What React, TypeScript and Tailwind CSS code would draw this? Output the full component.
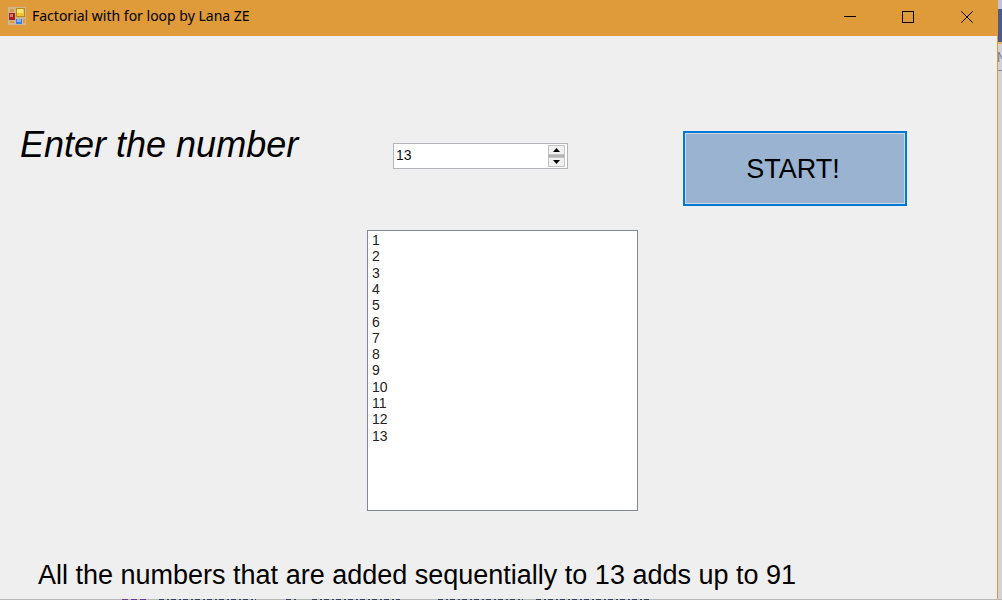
import { useState } from "react";

function AppIcon() {
  return (
    <svg width="18" height="18" viewBox="0 0 18 18" aria-hidden="true">
      <rect width="18" height="18" fill="#cdb493" />
      <rect x="2" y="2" width="4" height="3" fill="#df9a3a" />
      <rect x="2" y="14" width="4" height="2" fill="#df9a3a" />
      <rect x="15" y="12" width="2" height="4" fill="#df9a3a" />
      <rect x="1" y="6" width="6" height="7" fill="#a3201f" />
      <rect x="2" y="7" width="3" height="3" fill="#e0776e" />
      <rect x="8" y="1" width="9" height="9" fill="#b98a10" />
      <rect x="9" y="2" width="7" height="7" fill="#f0c52f" />
      <rect x="9" y="2" width="6" height="4" fill="#fbe477" />
      <rect x="8" y="12" width="6" height="5" fill="#3f7fe0" />
      <rect x="9" y="12" width="4" height="3" fill="#7fb2f7" />
    </svg>
  );
}

function TitleBar() {
  return (
    <header className="flex h-9 items-center bg-[#df9a3a] pb-1 pl-2">
      <AppIcon />
      <h1 className="ml-1.5 flex-1 font-['Noto_Sans',sans-serif] text-sm leading-5">
        Factorial with for loop by Lana ZE
      </h1>
      <div className="flex h-full pt-0.5">
        <button type="button" aria-label="Minimize" className="grid w-[58px] place-items-center">
          <svg width="12" height="12" viewBox="0 0 12 12" shapeRendering="crispEdges">
            <path d="M0 5.5H12" stroke="#000" />
          </svg>
        </button>
        <button type="button" aria-label="Maximize" className="grid w-[58px] place-items-center">
          <svg width="12" height="12" viewBox="0 0 12 12" shapeRendering="crispEdges">
            <rect x="0.5" y="0.5" width="11" height="11" fill="none" stroke="#000" />
          </svg>
        </button>
        <button type="button" aria-label="Close" className="grid w-[60px] place-items-center">
          <svg width="12" height="12" viewBox="0 0 12 12">
            <path d="M0.3 0.3L11.7 11.7M11.7 0.3L0.3 11.7" stroke="#000" />
          </svg>
        </button>
      </div>
    </header>
  );
}

function Spinner({ value, onChange }: { value: number; onChange: (n: number) => void }) {
  const arrow =
    "grid h-[10px] w-[17px] place-items-center border border-[#c4c4c4] bg-[#f0f0f0]";
  return (
    <div className="flex h-[26px] w-[175px] items-center border border-[#b4b4ba] bg-white pr-0.5">
      <input
        type="text"
        inputMode="numeric"
        aria-label="Number"
        value={value}
        onChange={(e) => onChange(Number(e.target.value) || 0)}
        className="h-5 min-w-0 flex-1 bg-transparent pb-0.5 pl-0.5 text-sm text-[#111] outline-none"
      />
      <div className="flex flex-col gap-0.5 bg-[#b4b4b4]">
        <button type="button" aria-label="Increase" className={arrow} onClick={() => onChange(value + 1)}>
          <svg width="7" height="4" viewBox="0 0 7 4">
            <path d="M3.5 0L7 4H0Z" />
          </svg>
        </button>
        <button type="button" aria-label="Decrease" className={arrow} onClick={() => onChange(Math.max(0, value - 1))}>
          <svg width="7" height="4" viewBox="0 0 7 4">
            <path d="M0 0H7L3.5 4Z" />
          </svg>
        </button>
      </div>
    </div>
  );
}

function EditorEdge() {
  return (
    <div className="flex w-1 flex-col bg-[#d4d4d8]" aria-hidden="true">
      <div className="h-[9px] bg-[#bfc3dc]" />
      <div className="h-[33px] bg-[#4d5b86]" />
      <div className="h-0.5 bg-[#e3b25f]" />
      <div className="flex h-[27px] items-center border-b border-[#8087ad] bg-[#d0d3dd]">
        <svg width="4" height="12" viewBox="0 0 4 12">
          <path d="M0.8 11V1L4 8" fill="none" stroke="#64779d" />
        </svg>
      </div>
    </div>
  );
}

function CodeEdge() {
  return (
    <svg className="block h-px w-full bg-[#b9b9b9]" viewBox="0 0 1002 1" preserveAspectRatio="none" aria-hidden="true">
      <path d="M122 .5H146" stroke="#6d3a94" strokeDasharray="6 3" />
      <path d="M159 .5H256M286 .5H296M312 .5H400M438 .5H523M536 .5H652" stroke="#33405f" strokeDasharray="5 3 2 2" />
    </svg>
  );
}

export default function App() {
  const [number, setNumber] = useState(13);
  const [total, setTotal] = useState(13);
  const items = Array.from({ length: total }, (_, i) => i + 1);
  const sum = items.reduce((a, b) => a + b, 0);

  return (
    <div className="flex min-h-screen flex-col font-['Liberation_Sans',Arial,sans-serif] text-black">
      <div className="flex flex-1">
        <div className="flex min-w-0 flex-1 flex-col border-r border-[#df9a3a] bg-[#efefef]">
          <TitleBar />
          <main className="flex flex-1 flex-col pt-[95px]">
            <div className="flex items-start">
              <h2 className="w-[393px] pl-5 text-[36px] leading-7 italic">Enter the number</h2>
              <div className="w-[290px] pt-3">
                <Spinner value={number} onChange={setNumber} />
              </div>
              <button
                type="button"
                onClick={() => setTotal(number)}
                className="h-[75px] w-56 border-2 border-[#0078d7] bg-[#9ab3d0] pr-1 text-[27px] leading-8 inset-ring inset-ring-[#d3d8df]"
              >
                START!
              </button>
            </div>
            <div className="mt-6 ml-[367px] h-[281px] w-[271px] overflow-y-auto border border-[#828790] bg-white pt-px pl-1">
              <ul className="grid h-[212px] text-sm leading-4 text-[#222]">
                {items.map((n) => (
                  <li key={n}>{n}</li>
                ))}
              </ul>
            </div>
            <p className="mt-12 pl-[38px] text-[27px] leading-8">
              All the numbers that are added sequentially to {total} adds up to {sum}
            </p>
          </main>
        </div>
        <EditorEdge />
      </div>
      <CodeEdge />
    </div>
  );
}
